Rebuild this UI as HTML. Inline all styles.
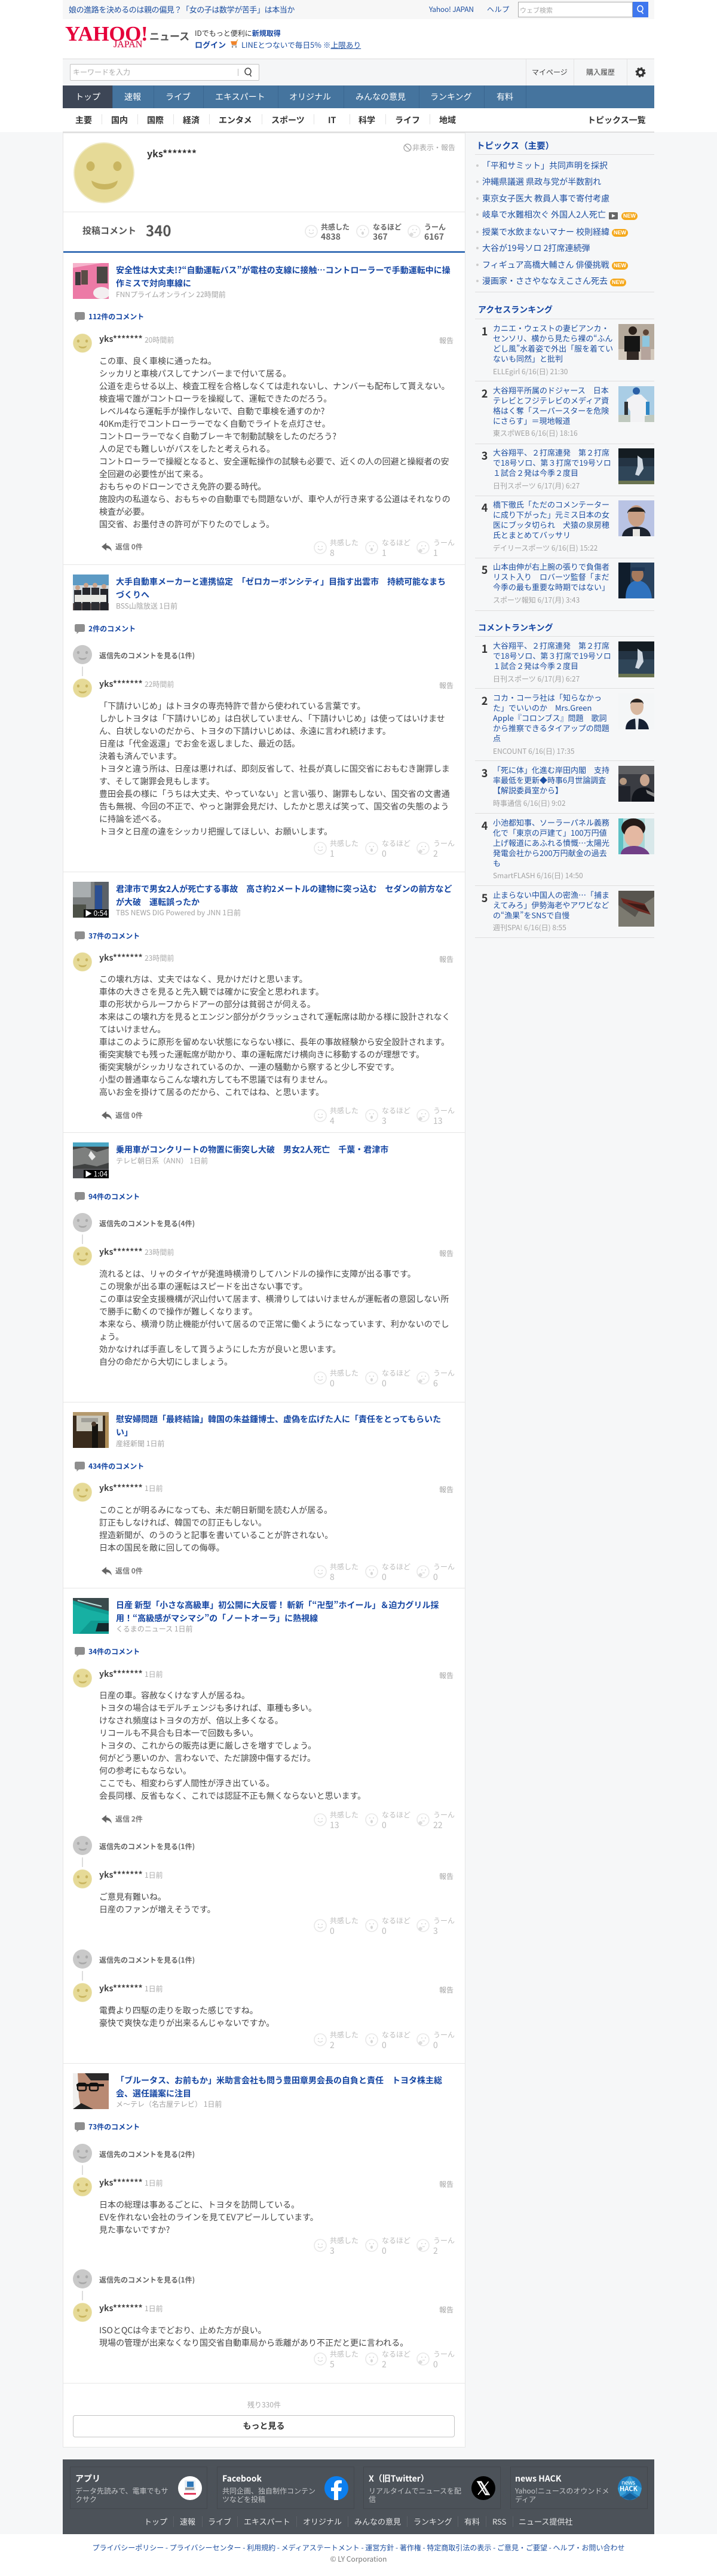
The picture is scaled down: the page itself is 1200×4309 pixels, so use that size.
<!DOCTYPE html>
<html lang="ja"><head><meta charset="utf-8"><title>yks******* - Yahoo!ニュース</title>
<style>
html,body{margin:0;padding:0}
body{position:relative;width:1200px;height:4309px;overflow:hidden;background:#f6f7f8;font-family:"Noto Sans CJK JP","Liberation Sans",sans-serif;color:#333}
div,span,svg,i,b,em{position:absolute;white-space:nowrap;font-style:normal}
a{color:inherit;text-decoration:none}
.bx{display:block}
.t{left:194px;font:bold 14px/22px "Noto Sans CJK JP",sans-serif;color:#1546a3}
.s{left:194px;font-size:12px;line-height:18px;color:#a3a3a3}
.c{left:148px;font:bold 12px/18px "Noto Sans CJK JP",sans-serif;color:#1546a3}
.ci{left:125px;width:17px;height:17px}
.th{left:122px;width:60px;height:60px}
.av{left:122px;width:32px;height:32px}
.n{left:166px;font:bold 14px/20px "Noto Sans CJK JP",sans-serif;color:#444}
.tm{left:242px;font-size:12px;line-height:20px;color:#aaa}
.rp{left:735px;font-size:12px;line-height:18px;color:#a3a3a3}
.b{left:166px;font-size:14px;line-height:21px;color:#444}
.re{left:170px;width:17px;height:15px}
.rt{left:193px;font:bold 12px/18px "Noto Sans CJK JP",sans-serif;color:#777}
.g{left:166px;font:bold 12px/18px "Noto Sans CJK JP",sans-serif;color:#666}
.ln{left:137px;width:2px;height:16px;background:#ddd}
.hr{left:106px;width:672px;height:1px;background:#e6e6e6}
.rr{left:0;width:0;height:0}
.rr svg{top:6px;width:22px;height:22px}
.rr i{top:0;font-size:12px;line-height:18px;color:#bcbcbc}
.rr em{top:16px;font-size:14px;line-height:20px;color:#bcbcbc}
.x1{left:525px}.x2{left:611px}.x3{left:697px}
.y1{left:552px}.y2{left:639px}.y3{left:725px}
.sh{left:795px;width:300px;height:1px;background:#dedede}
.st{left:800px;font:bold 14px/20px "Noto Sans CJK JP",sans-serif;color:#1546a3}
.si{left:807px;font-size:14px;line-height:20px;color:#1d4fa1}
.sb{left:797px;width:4px;height:4px;border-radius:2px;background:#ccc}
.new{width:27px;height:13px;border-radius:7px;background:#f5a81c;color:#fff;font:bold 9px/13px "Liberation Sans",sans-serif;text-align:center}
.rk{left:804px;width:14px;text-align:center;font:bold 18px/20px "Noto Sans CJK JP",sans-serif;color:#333}
.rt2{left:825px;font-size:13px;line-height:16.9px;color:#1d4fa1}
.rs{left:825px;font-size:12px;line-height:16px;color:#a3a3a3}
.ri{left:1035px;width:60px;height:60px}
.nav{top:143px;height:38px;font-size:14px;line-height:38px;color:#fff}
.ns{top:143px;width:1px;height:38px;background:#3a6690}
.sn{top:191px;font:bold 14px/20px "Noto Sans CJK JP",sans-serif;color:#333}
.sd{top:191px;width:1px;height:17px;background:#e3e3e3}
.fc{top:4126px;width:228px;height:69px;border:1px solid #43474d;background:#4c5259}
.ft{top:4136px;font:bold 14px/20px "Noto Sans CJK JP",sans-serif;color:#fff}
.fd{top:4160px;font-size:12px;line-height:13.5px;color:#c4c6c9}
.fi{top:4142px;width:40px;height:40px}
.fn{top:4209px;font-size:13px;line-height:18px;color:#e4e5e6}
.fs{top:4209px;width:1px;height:18px;background:#5d6269}
.play{left:140px;width:42px;height:14px;background:rgba(0,0,0,.85);color:#fff;font-size:12px;line-height:14px;text-align:center}
</style></head><body>
<svg width="0" height="0" style="left:0;top:0"><defs>
<symbol id="sm" viewBox="0 0 102 102"><circle cx="51" cy="51" r="50" fill="#e6da97" stroke="#efe9c4" stroke-width="2"/><ellipse cx="28.5" cy="40" rx="7" ry="8" fill="#c9b560"/><ellipse cx="73.5" cy="40" rx="7" ry="8" fill="#c9b560"/><path d="M30 64Q52 76 74 64Q72 79 52 79Q32 79 30 64Z" fill="#c9b560"/></symbol>
<symbol id="gy" viewBox="0 0 102 102"><circle cx="51" cy="51" r="51" fill="#c9c9c9"/><ellipse cx="28.5" cy="40" rx="7" ry="8" fill="#aaa"/><ellipse cx="73.5" cy="40" rx="7" ry="8" fill="#aaa"/><path d="M30 64Q52 76 74 64Q72 79 52 79Q32 79 30 64Z" fill="#a8a8a8"/></symbol>
<symbol id="f1" viewBox="0 0 22 22"><circle cx="11" cy="11" r="10" fill="#fff" stroke="#e8e8e8" stroke-width="1.6"/><circle cx="8" cy="9" r="1" fill="#d6d6d6"/><circle cx="14" cy="9" r="1" fill="#d6d6d6"/><path d="M7 13q4 4 8 0" fill="none" stroke="#d6d6d6" stroke-width="1.2"/></symbol>
<symbol id="f2" viewBox="0 0 22 22"><circle cx="11" cy="11" r="10" fill="#fff" stroke="#e8e8e8" stroke-width="1.6"/><circle cx="8" cy="8" r="1" fill="#d6d6d6"/><circle cx="14" cy="8" r="1" fill="#d6d6d6"/><ellipse cx="11" cy="14" rx="2" ry="2.8" fill="#d6d6d6"/></symbol>
<symbol id="f3" viewBox="0 0 22 22"><circle cx="11" cy="11" r="10" fill="#fff" stroke="#e8e8e8" stroke-width="1.6"/><circle cx="9" cy="8" r="1" fill="#d6d6d6"/><circle cx="15" cy="8" r="1" fill="#d6d6d6"/><path d="M10 13h4" stroke="#d6d6d6" stroke-width="1.2"/><path d="M3 16l3-3 3 1 1 3-3 3-3-1z" fill="#dcdcdc"/></symbol>
<symbol id="cm" viewBox="0 0 17 17"><path d="M2.5 0h12A2.5 2.5 0 0 1 17 2.5v8a2.500 2.500 0 0 1-2.500 2.500H7L3.500 16.500V13h-1A2.500 2.500 0 0 1 0 10.500v-8A2.500 2.500 0 0 1 2.500 0z" fill="#8e8e8e"/></symbol>
<symbol id="ar" viewBox="0 0 17 15"><path d="M8 0L0 6.500l8 6.500V9c4 0 7 1.500 9 5.500C16.500 8.500 13 4.500 8 4z" fill="#666"/></symbol>
</defs></svg>

<!-- top -->
<div style="left:0;top:0;width:1200px;height:221px;background:#fff"></div>
<div style="left:105px;top:0;width:990px;height:32px;background:#f7f7f7"></div>
<div style="left:115px;top:7px;font-size:13px;line-height:18px;color:#1d4fa1;letter-spacing:-.4px">娘の進路を決めるのは親の偏見？「女の子は数学が苦手」は本当か</div>
<div style="left:718px;top:7px;font-size:12px;line-height:18px;color:#1d4fa1;letter-spacing:-.2px">Yahoo! JAPAN</div>
<div style="left:815px;top:7px;font-size:12px;line-height:18px;color:#1d4fa1;letter-spacing:.6px">ヘルプ</div>
<div style="left:867px;top:3px;width:190px;height:24px;border:1px solid #aaa;background:#fff"></div>
<div style="left:870px;top:8px;font-size:11px;line-height:18px;color:#aaa">ウェブ検索</div>
<div style="left:1059px;top:3px;width:26px;height:26px;background:#3f77ee"></div>
<svg style="left:1064px;top:8px" width="16" height="16" viewBox="0 0 16 16"><ellipse cx="7.500" cy="6.500" rx="4.500" ry="5" fill="none" stroke="#fff" stroke-width="1.600"/><path d="M9.500 11l3 4" stroke="#fff" stroke-width="1.600"/></svg>

<div style="left:109px;top:34px;font:bold 35px/46px 'Liberation Serif',serif;color:#e5003a;letter-spacing:-.4px">YAHOO!</div>
<div style="left:190px;top:65px;font:normal 16px/20px 'Liberation Serif',serif;color:#d81e4f;-webkit-text-stroke:.3px #d81e4f">JAPAN</div>
<div style="left:250px;top:47px;font:bold 17px/26px 'Noto Sans CJK JP',sans-serif;color:#555">ニュース</div>
<div style="left:326px;top:47px;font-size:12px;line-height:18px;color:#333">IDでもっと便利に<b style="position:static;color:#1546a3">新規取得</b></div>
<div style="left:326px;top:66px;font:bold 13px/18px 'Noto Sans CJK JP',sans-serif;color:#1546a3">ログイン</div>
<svg style="left:385px;top:66px" width="15" height="15" viewBox="0 0 15 15"><path d="M1 3h11l-1.500 6H3z" fill="#f0852c"/><path d="M3 10h8" stroke="#888"/><circle cx="4" cy="12.500" r="1.200" fill="#777"/><circle cx="10" cy="12.500" r="1.200" fill="#777"/><path d="M11 3l2-3" stroke="#e8a93c" stroke-width="1.500"/></svg>
<div style="left:404px;top:66px;font-size:12.700px;line-height:18px;color:#1d4fa1">LINEとつないで毎日5% ※<span style="position:static;text-decoration:underline">上限あり</span></div>

<div style="left:105px;top:98px;width:990px;height:45px;background:#f5f6f7;box-shadow:inset 0 1px 0 #dcdcdc"></div>
<div style="left:117px;top:107px;width:315px;height:26px;border:1px solid #c4c4c4;border-radius:2px;background:#fff"></div>
<div style="left:122px;top:112px;font-size:12px;line-height:18px;color:#aaa">キーワードを入力</div>
<div style="left:398px;top:115px;width:1px;height:12px;background:#bbb"></div>
<svg style="left:407px;top:112px" width="18" height="18" viewBox="0 0 18 18"><ellipse cx="8" cy="7.500" rx="5" ry="5.500" fill="none" stroke="#444" stroke-width="1.500"/><path d="M11 12l2.500 4" stroke="#444" stroke-width="1.500"/></svg>
<div style="left:880px;top:99px;width:1px;height:44px;background:#e4e4e4"></div>
<div style="left:960px;top:99px;width:1px;height:44px;background:#e4e4e4"></div>
<div style="left:1049px;top:99px;width:1px;height:44px;background:#e4e4e4"></div>
<div style="left:890px;top:112px;font-size:12px;line-height:18px;color:#444">マイページ</div>
<div style="left:981px;top:112px;font-size:12px;line-height:18px;color:#444">購入履歴</div>
<svg style="left:1063px;top:112px" width="18" height="18" viewBox="0 0 18 18"><circle cx="9" cy="9" r="5" fill="none" stroke="#333" stroke-width="3.500"/><circle cx="9" cy="9" r="7.300" fill="none" stroke="#333" stroke-width="2.400" stroke-dasharray="3 2.730"/></svg>

<div style="left:105px;top:143px;width:990px;height:38px;background:#45749e"></div>
<div style="left:105px;top:143px;width:83px;height:38px;background:#3d4656"></div>
<div class="ns" style="left:188px"></div><div class="ns" style="left:257px"></div><div class="ns" style="left:340px"></div><div class="ns" style="left:465px"></div><div class="ns" style="left:575px"></div><div class="ns" style="left:701px"></div><div class="ns" style="left:810px"></div><div class="ns" style="left:880px"></div>
<div class="nav" style="left:126px">トップ</div><div class="nav" style="left:208px">速報</div><div class="nav" style="left:277px">ライブ</div><div class="nav" style="left:360px">エキスパート</div><div class="nav" style="left:484px">オリジナル</div><div class="nav" style="left:595px">みんなの意見</div><div class="nav" style="left:720px">ランキング</div><div class="nav" style="left:831px">有料</div>

<div class="sn" style="left:126px">主要</div><div class="sn" style="left:186px">国内</div><div class="sn" style="left:246px">国際</div><div class="sn" style="left:306px">経済</div><div class="sn" style="left:366px">エンタメ</div><div class="sn" style="left:454px">スポーツ</div><div class="sn" style="left:549px">IT</div><div class="sn" style="left:600px">科学</div><div class="sn" style="left:661px">ライフ</div><div class="sn" style="left:735px">地域</div><div class="sn" style="left:983px">トピックス一覧</div>
<div class="sd" style="left:170px"></div><div class="sd" style="left:230px"></div><div class="sd" style="left:290px"></div><div class="sd" style="left:350px"></div><div class="sd" style="left:438px"></div><div class="sd" style="left:525px"></div><div class="sd" style="left:585px"></div><div class="sd" style="left:645px"></div><div class="sd" style="left:719px"></div>
<div style="left:105px;top:220px;width:990px;height:2px;background:#dedede"></div>

<!-- main card -->
<div style="left:105px;top:222px;width:672px;height:3870px;background:#fff;border:1px solid #e6e6e6"></div>
<svg style="left:123px;top:238px" width="102" height="102"><use href="#sm"/></svg>
<div style="left:246px;top:244px;font:bold 16px/24px 'Noto Sans CJK JP',sans-serif;color:#333">yks*******</div>
<svg style="left:675px;top:240px" width="14" height="14" viewBox="0 0 14 14"><circle cx="7" cy="7" r="6" fill="none" stroke="#999" stroke-width="1.200"/><path d="M3 3l8 8" stroke="#999" stroke-width="1.200"/></svg>
<div style="left:690px;top:238px;font-size:12px;line-height:18px;color:#a3a3a3">非表示・報告</div>
<div style="left:106px;top:354px;width:672px;height:1px;background:#e6e6e6"></div>
<div style="left:138px;top:375px;font:bold 15px/22px 'Noto Sans CJK JP',sans-serif;color:#555">投稿コメント</div>
<div style="left:244px;top:368px;font:bold 24px/34px 'Noto Sans CJK JP',sans-serif;color:#555">340</div>
<svg style="left:510px;top:376px" width="22" height="22"><use href="#f1"/></svg>
<svg style="left:596px;top:376px" width="22" height="22"><use href="#f2"/></svg>
<svg style="left:682px;top:376px" width="22" height="22"><use href="#f3"/></svg>
<div style="left:537px;top:371px;font:bold 12px/18px 'Noto Sans CJK JP',sans-serif;color:#666">共感した</div><div style="left:537px;top:386px;font:bold 14px/20px 'Noto Sans CJK JP',sans-serif;color:#666">4838</div>
<div style="left:624px;top:371px;font:bold 12px/18px 'Noto Sans CJK JP',sans-serif;color:#666">なるほど</div><div style="left:624px;top:386px;font:bold 14px/20px 'Noto Sans CJK JP',sans-serif;color:#666">367</div>
<div style="left:710px;top:371px;font:bold 12px/18px 'Noto Sans CJK JP',sans-serif;color:#666">うーん</div><div style="left:710px;top:386px;font:bold 14px/20px 'Noto Sans CJK JP',sans-serif;color:#666">6167</div>
<div style="left:106px;top:420px;width:672px;height:3px;background:#3e73b8"></div>

<!-- A1 -->
<svg class="th" style="top:440px" viewBox="0 0 60 60"><rect width="60" height="60" fill="#f6b3cc"/><path d="M0 8l48-8h12v60H0z" fill="#ec7aa6"/><rect x="4" y="15" width="9" height="22" fill="#3d3a3c"/><rect x="14" y="12" width="11" height="24" fill="#5b4d46"/><rect x="40" y="6" width="18" height="28" fill="#4a4744"/><ellipse cx="48" cy="50" rx="14" ry="10" fill="#f3eef0"/></svg>
<div class="t" style="top:441px">安全性は大丈夫!?“自動運転バス”が電柱の支線に接触…コントローラーで手動運転中に操<br>作ミスで対向車線に</div>
<div class="s" style="top:484px">FNNプライムオンライン 22時間前</div>
<svg class="ci" style="top:522px"><use href="#cm"/></svg><div class="c" style="top:521px">112件のコメント</div>
<svg class="av" style="top:558px"><use href="#sm"/></svg>
<div class="n" style="top:557px">yks*******</div><div class="tm" style="top:559px">20時間前</div><div class="rp" style="top:561px">報告</div>
<div class="b" style="top:594px">この車、良く車検に通ったね。<br>シッカリと車検パスしてナンバーまで付いて居る。<br>公道を走らせる以上、検査工程を合格しなくては走れないし、ナンバーも配布して貰えない。<br>検査場で誰がコントローラを操縦して、運転できたのだろう。<br>レベル4なら運転手が操作しないで、自動で車検を通すのか?<br>40Km走行でコントローラーでなく自動でライトを点灯させ。<br>コントローラーでなく自動ブレーキで制動試験をしたのだろう?<br>人の足でも難しいがパスをしたと考えられる。<br>コントローラーで操縦となると、安全運転操作の試験も必要で、近くの人の回避と操縦者の安<br>全回避の必要性が出て来る。<br>おもちゃのドローンでさえ免許の要る時代。<br>施設内の私道なら、おもちゃの自動車でも問題ないが、車や人が行き来する公道はそれなりの<br>検査が必要。<br>国交省、お墨付きの許可が下りたのでしょう。</div>
<svg class="re" style="top:908px"><use href="#ar"/></svg><div class="rt" style="top:906px">返信 0件</div>
<div class="rr" style="top:899px"><svg class="x1"><use href="#f1"/></svg><i class="y1">共感した</i><em class="y1">8</em><svg class="x2"><use href="#f2"/></svg><i class="y2">なるほど</i><em class="y2">1</em><svg class="x3"><use href="#f3"/></svg><i class="y3">うーん</i><em class="y3">1</em></div>
<div class="hr" style="top:944px"></div>

<!-- A2 -->
<svg class="th" style="top:961px" viewBox="0 0 60 60"><rect width="60" height="60" fill="#cfd8de"/><rect width="60" height="18" fill="#5c9ac4"/><rect y="48" width="60" height="12" fill="#5a4f4f"/><rect x="2" y="26" width="12" height="34" fill="#2c2d33"/><rect x="16" y="22" width="13" height="38" fill="#24252b"/><rect x="31" y="22" width="13" height="38" fill="#2c2d33"/><rect x="46" y="24" width="13" height="36" fill="#24252b"/><circle cx="8" cy="22" r="4" fill="#c9a48c"/><circle cx="22" cy="18" r="4" fill="#c9a48c"/><circle cx="37" cy="18" r="4" fill="#c9a48c"/><circle cx="52" cy="20" r="4" fill="#c9a48c"/><rect x="3" y="34" width="53" height="12" fill="#e8e8e4"/></svg>
<div class="t" style="top:962px">大手自動車メーカーと連携協定　「ゼロカーボンシティ」目指す出雲市　持続可能なまち<br>づくりへ</div>
<div class="s" style="top:1005px">BSS山陰放送 1日前</div>
<svg class="ci" style="top:1044px"><use href="#cm"/></svg><div class="c" style="top:1043px">2件のコメント</div>
<svg class="av" style="top:1079px"><use href="#gy"/></svg><div class="g" style="top:1088px">返信先のコメントを見る(1件)</div><div class="ln" style="top:1115px"></div>
<svg class="av" style="top:1135px"><use href="#sm"/></svg>
<div class="n" style="top:1134px">yks*******</div><div class="tm" style="top:1135px">22時間前</div><div class="rp" style="top:1138px">報告</div>
<div class="b" style="top:1171px">「下請けいじめ」はトヨタの専売特許で昔から使われている言葉です。<br>しかしトヨタは「下請けいじめ」は白状していません、「下請けいじめ」は使ってはいけませ<br>ん、白状しないのだから、トヨタの下請けいじめは、永遠に言われ続けます。<br>日産は「代金返還」でお金を返しました、最近の話。<br>決着も済んでいます。<br>トヨタと違う所は、日産は悪ければ、即刻反省して、社長が真しに国交省におもむき謝罪しま<br>す、そして謝罪会見もします。<br>豊田会長の様に「うちは大丈夫、やっていない」と言い張り、謝罪もしない、国交省の文書通<br>告も無視、今回の不正で、やっと謝罪会見だけ、したかと思えば笑って、国交省の失態のよう<br>に持論を述べる。<br>トヨタと日産の違をシッカリ把握してほしい、お願いします。</div>
<div class="rr" style="top:1402px"><svg class="x1"><use href="#f1"/></svg><i class="y1">共感した</i><em class="y1">1</em><svg class="x2"><use href="#f2"/></svg><i class="y2">なるほど</i><em class="y2">0</em><svg class="x3"><use href="#f3"/></svg><i class="y3">うーん</i><em class="y3">2</em></div>
<div class="hr" style="top:1458px"></div>

<!-- A3 -->
<svg class="th" style="top:1475px" viewBox="0 0 60 60"><rect width="60" height="60" fill="#7b7f80"/><rect x="0" y="0" width="30" height="26" fill="#a9aeb0"/><rect x="36" y="0" width="24" height="60" fill="#5b6168"/><rect x="37" y="6" width="12" height="40" fill="#2b4f93"/><path d="M0 38h22v22H0z" fill="#4d5148"/></svg>
<div class="play" style="top:1521px">▶ 0:54</div>
<div class="t" style="top:1476px">君津市で男女2人が死亡する事故　高さ約2メートルの建物に突っ込む　セダンの前方など<br>が大破　運転誤ったか</div>
<div class="s" style="top:1518px">TBS NEWS DIG Powered by JNN 1日前</div>
<svg class="ci" style="top:1558px"><use href="#cm"/></svg><div class="c" style="top:1557px">37件のコメント</div>
<svg class="av" style="top:1593px"><use href="#sm"/></svg>
<div class="n" style="top:1592px">yks*******</div><div class="tm" style="top:1593px">23時間前</div><div class="rp" style="top:1596px">報告</div>
<div class="b" style="top:1628px">この壊れ方は、丈夫ではなく、見かけだけと思います。<br>車体の大きさを見ると先入観では確かに安全と思われます。<br>車の形状からルーフからドアーの部分は貧弱さが伺える。<br>本来はこの壊れ方を見るとエンジン部分がクラッシュされて運転席は助かる様に設計されなく<br>てはいけません。<br>車はこのように原形を留めない状態にならない様に、長年の事故経験から安全設計されます。<br>衝突実験でも残った運転席が助かり、車の運転席だけ横向きに移動するのが理想です。<br>衝突実験がシッカリなされているのか、一連の騒動から察すると少し不安です。<br>小型の普通車ならこんな壊れ方しても不思議では有りません。<br>高いお金を掛けて居るのだから、これではね、と思います。</div>
<svg class="re" style="top:1859px"><use href="#ar"/></svg><div class="rt" style="top:1857px">返信 0件</div>
<div class="rr" style="top:1849px"><svg class="x1"><use href="#f1"/></svg><i class="y1">共感した</i><em class="y1">4</em><svg class="x2"><use href="#f2"/></svg><i class="y2">なるほど</i><em class="y2">3</em><svg class="x3"><use href="#f3"/></svg><i class="y3">うーん</i><em class="y3">13</em></div>
<div class="hr" style="top:1894px"></div>

<!-- A4 -->
<svg class="th" style="top:1911px" viewBox="0 0 60 60"><rect width="60" height="60" fill="#3f4141"/><rect width="60" height="7" fill="#4aa6c4"/><path d="M0 12l20-4 20 8 20-6v24l-20 6-20-4-20 4z" fill="#7d7f7e"/><path d="M30 14l8 10-6 6-6-8z" fill="#e9eaea"/><rect y="44" width="60" height="16" fill="#55565a"/></svg>
<div class="play" style="top:1957px;left:140px;background:#000">▶ 1:04</div>
<div class="t" style="top:1912px">乗用車がコンクリートの物置に衝突し大破　男女2人死亡　千葉・君津市</div>
<div class="s" style="top:1933px">テレビ朝日系（ANN） 1日前</div>
<svg class="ci" style="top:1994px"><use href="#cm"/></svg><div class="c" style="top:1993px">94件のコメント</div>
<svg class="av" style="top:2029px"><use href="#gy"/></svg><div class="g" style="top:2038px">返信先のコメントを見る(4件)</div><div class="ln" style="top:2065px"></div>
<svg class="av" style="top:2085px"><use href="#sm"/></svg>
<div class="n" style="top:2084px">yks*******</div><div class="tm" style="top:2085px">23時間前</div><div class="rp" style="top:2088px">報告</div>
<div class="b" style="top:2121px">流れるとは、リャのタイヤが発進時横滑りしてハンドルの操作に支障が出る事です。<br>この現象が出る車の運転はスピードを出さない事です。<br>この車は安全支援機構が沢山付いて居ます、横滑りしてはいけませんが運転者の意図しない所<br>で勝手に動くので操作が難しくなります。<br>本来なら、横滑り防止機能が付いて居るので正常に働くようになっています、利かないのでし<br>ょう。<br>効かなければ手直しをして貰うようにした方が良いと思います。<br>自分の命だから大切にしましょう。</div>
<div class="rr" style="top:2288px"><svg class="x1"><use href="#f1"/></svg><i class="y1">共感した</i><em class="y1">0</em><svg class="x2"><use href="#f2"/></svg><i class="y2">なるほど</i><em class="y2">0</em><svg class="x3"><use href="#f3"/></svg><i class="y3">うーん</i><em class="y3">6</em></div>
<div class="hr" style="top:2345px"></div>

<!-- A5 -->
<svg class="th" style="top:2362px" viewBox="0 0 60 60"><rect width="60" height="60" fill="#3a2c1d"/><rect x="0" y="0" width="60" height="6" fill="#b59a6e"/><rect x="6" y="6" width="44" height="26" fill="#c9c7bb"/><rect x="14" y="10" width="28" height="7" fill="#a09f98"/><rect x="32" y="20" width="10" height="40" fill="#15130f"/><circle cx="35" cy="20" r="4" fill="#4a3a2c"/><rect x="54" y="6" width="6" height="54" fill="#b08f58"/></svg>
<div class="t" style="top:2363px">慰安婦問題「最終結論」韓国の朱益鍾博士、虚偽を広げた人に「責任をとってもらいた<br>い」</div>
<div class="s" style="top:2406px">産経新聞 1日前</div>
<svg class="ci" style="top:2445px"><use href="#cm"/></svg><div class="c" style="top:2444px">434件のコメント</div>
<svg class="av" style="top:2480px"><use href="#sm"/></svg>
<div class="n" style="top:2479px">yks*******</div><div class="tm" style="top:2480px">1日前</div><div class="rp" style="top:2483px">報告</div>
<div class="b" style="top:2516px">このことが明るみになっても、未だ朝日新聞を読む人が居る。<br>訂正もしなければ、韓国での訂正もしない。<br>捏造新聞が、のうのうと記事を書いていることが許されない。<br>日本の国民を敵に回しての侮辱。</div>
<svg class="re" style="top:2621px"><use href="#ar"/></svg><div class="rt" style="top:2619px">返信 0件</div>
<div class="rr" style="top:2612px"><svg class="x1"><use href="#f1"/></svg><i class="y1">共感した</i><em class="y1">8</em><svg class="x2"><use href="#f2"/></svg><i class="y2">なるほど</i><em class="y2">0</em><svg class="x3"><use href="#f3"/></svg><i class="y3">うーん</i><em class="y3">0</em></div>
<div class="hr" style="top:2656px"></div>

<!-- A6 -->
<svg class="th" style="top:2673px" viewBox="0 0 60 60"><rect width="60" height="60" fill="#0e9a90"/><path d="M0 0h60v22L30 14 0 4z" fill="#3a4a4c"/><path d="M0 10l28 10 32 8v10H30L10 60H0z" fill="#17b0a3"/><path d="M42 42h18v14H38z" fill="#12282c"/><path d="M8 4l40 10" stroke="#bfe2de" stroke-width="2"/></svg>
<div class="t" style="top:2674px">日産 新型「小さな高級車」初公開に大反響！ 斬新「“卍型”ホイール」＆迫力グリル採<br>用！“高級感がマシマシ”の「ノートオーラ」に熱視線</div>
<div class="s" style="top:2716px">くるまのニュース 1日前</div>
<svg class="ci" style="top:2755px"><use href="#cm"/></svg><div class="c" style="top:2754px">34件のコメント</div>
<svg class="av" style="top:2791px"><use href="#sm"/></svg>
<div class="n" style="top:2790px">yks*******</div><div class="tm" style="top:2791px">1日前</div><div class="rp" style="top:2794px">報告</div>
<div class="b" style="top:2826px">日産の車。容赦なくけなす人が居るね。<br>トヨタの場合はモデルチェンジも多ければ、車種も多い。<br>けなされ頻度はトヨタの方が、倍以上多くなる。<br>リコールも不具合も日本一で回数も多い。<br>トヨタの、これからの販売は更に厳しさを増すでしょう。<br>何がどう悪いのか、言わないで、ただ誹謗中傷するだけ。<br>何の参考にもならない。<br>ここでも、相変わらず人間性が浮き出ている。<br>会長同様、反省もなく、これでは認証不正も無くならないと思います。</div>
<svg class="re" style="top:3036px"><use href="#ar"/></svg><div class="rt" style="top:3034px">返信 2件</div>
<div class="rr" style="top:3027px"><svg class="x1"><use href="#f1"/></svg><i class="y1">共感した</i><em class="y1">13</em><svg class="x2"><use href="#f2"/></svg><i class="y2">なるほど</i><em class="y2">0</em><svg class="x3"><use href="#f3"/></svg><i class="y3">うーん</i><em class="y3">22</em></div>
<svg class="av" style="top:3071px"><use href="#gy"/></svg><div class="g" style="top:3080px">返信先のコメントを見る(1件)</div><div class="ln" style="top:3107px"></div>
<svg class="av" style="top:3127px"><use href="#sm"/></svg>
<div class="n" style="top:3126px">yks*******</div><div class="tm" style="top:3127px">1日前</div><div class="rp" style="top:3130px">報告</div>
<div class="b" style="top:3163px">ご意見有難いね。<br>日産のファンが増えそうです。</div>
<div class="rr" style="top:3204px"><svg class="x1"><use href="#f1"/></svg><i class="y1">共感した</i><em class="y1">0</em><svg class="x2"><use href="#f2"/></svg><i class="y2">なるほど</i><em class="y2">0</em><svg class="x3"><use href="#f3"/></svg><i class="y3">うーん</i><em class="y3">3</em></div>
<svg class="av" style="top:3261px"><use href="#gy"/></svg><div class="g" style="top:3270px">返信先のコメントを見る(1件)</div><div class="ln" style="top:3297px"></div>
<svg class="av" style="top:3317px"><use href="#sm"/></svg>
<div class="n" style="top:3316px">yks*******</div><div class="tm" style="top:3317px">1日前</div><div class="rp" style="top:3320px">報告</div>
<div class="b" style="top:3353px">電費より四駆の走りを取った感じですね。<br>豪快で爽快な走りが出来るんじゃないですか。</div>
<div class="rr" style="top:3395px"><svg class="x1"><use href="#f1"/></svg><i class="y1">共感した</i><em class="y1">2</em><svg class="x2"><use href="#f2"/></svg><i class="y2">なるほど</i><em class="y2">0</em><svg class="x3"><use href="#f3"/></svg><i class="y3">うーん</i><em class="y3">0</em></div>
<div class="hr" style="top:3451px"></div>

<!-- A7 -->
<svg class="th" style="top:3468px" viewBox="0 0 60 60"><rect width="60" height="60" fill="#f0efee"/><path d="M8 0h52v60H14L10 40z" fill="#b98a73"/><path d="M20 0h40v12H30z" fill="#2c2a2a"/><path d="M6 18h46v4H6z" fill="#111"/><rect x="8" y="17" width="14" height="12" rx="3" fill="none" stroke="#111" stroke-width="2.500"/><rect x="28" y="17" width="14" height="12" rx="3" fill="none" stroke="#111" stroke-width="2.500"/><path d="M0 60l14-10 20 10z" fill="#222"/></svg>
<div class="t" style="top:3469px">「ブルータス、お前もか」米助言会社も問う豊田章男会長の自負と責任　トヨタ株主総<br>会、選任議案に注目</div>
<div class="s" style="top:3511px">メ～テレ（名古屋テレビ） 1日前</div>
<svg class="ci" style="top:3550px"><use href="#cm"/></svg><div class="c" style="top:3549px">73件のコメント</div>
<svg class="av" style="top:3586px"><use href="#gy"/></svg><div class="g" style="top:3595px">返信先のコメントを見る(2件)</div><div class="ln" style="top:3622px"></div>
<svg class="av" style="top:3642px"><use href="#sm"/></svg>
<div class="n" style="top:3641px">yks*******</div><div class="tm" style="top:3642px">1日前</div><div class="rp" style="top:3645px">報告</div>
<div class="b" style="top:3678px">日本の総理は事あるごとに、トヨタを訪問している。<br>EVを作れない会社のラインを見てEVアピールしています。<br>見た事ないですか?</div>
<div class="rr" style="top:3739px"><svg class="x1"><use href="#f1"/></svg><i class="y1">共感した</i><em class="y1">3</em><svg class="x2"><use href="#f2"/></svg><i class="y2">なるほど</i><em class="y2">0</em><svg class="x3"><use href="#f3"/></svg><i class="y3">うーん</i><em class="y3">2</em></div>
<svg class="av" style="top:3796px"><use href="#gy"/></svg><div class="g" style="top:3805px">返信先のコメントを見る(1件)</div><div class="ln" style="top:3832px"></div>
<svg class="av" style="top:3852px"><use href="#sm"/></svg>
<div class="n" style="top:3851px">yks*******</div><div class="tm" style="top:3852px">1日前</div><div class="rp" style="top:3855px">報告</div>
<div class="b" style="top:3888px">ISOとQCは今までどおり、止めた方が良い。<br>現場の管理が出来なくなり国交省自動車局から乖離があり不正だと更に言われる。</div>
<div class="rr" style="top:3929px"><svg class="x1"><use href="#f1"/></svg><i class="y1">共感した</i><em class="y1">5</em><svg class="x2"><use href="#f2"/></svg><i class="y2">なるほど</i><em class="y2">2</em><svg class="x3"><use href="#f3"/></svg><i class="y3">うーん</i><em class="y3">0</em></div>
<div class="hr" style="top:3986px"></div>

<div style="left:106px;width:672px;top:4014px;text-align:center;font-size:12px;line-height:18px;color:#aaa">残り330件</div>
<div style="left:122px;top:4040px;width:637px;height:35px;border:1px solid #c4c4c4;border-radius:4px;background:#fff;text-align:center;font:bold 14px/35px 'Noto Sans CJK JP',sans-serif;color:#333">もっと見る</div>

<!-- sidebar -->
<div class="sh" style="top:220px;height:2px"></div>
<div class="st" style="left:797px;top:234px;font-size:14.500px">トピックス（主要）</div>
<div class="sh" style="top:258px"></div>
<div class="sb" style="top:275px"></div><div class="si" style="top:267px;left:807px">「平和サミット」共同声明を採択</div>
<div class="sb" style="top:302px"></div><div class="si" style="top:294px">沖縄県議選 県政与党が半数割れ</div>
<div class="sb" style="top:330px"></div><div class="si" style="top:322px">東京女子医大 教員人事で寄付考慮</div>
<div class="sb" style="top:357px"></div><div class="si" style="top:349px">岐阜で水難相次ぐ 外国人2人死亡</div>
<div style="left:1019px;top:355px;width:15px;height:12px;background:#666;border-radius:1px"></div><svg style="left:1024px;top:358px" width="6" height="6"><path d="M0 0l6 3-6 3z" fill="#fff"/></svg><div class="new" style="left:1040px;top:355px">NEW</div>
<div class="sb" style="top:386px"></div><div class="si" style="top:378px">授業で水飲まないマナー 校則経緯</div><div class="new" style="left:1024px;top:383px">NEW</div>
<div class="sb" style="top:413px"></div><div class="si" style="top:405px">大谷が19号ソロ 2打席連続弾</div>
<div class="sb" style="top:441px"></div><div class="si" style="top:433px">フィギュア高橋大輔さん 俳優挑戦</div><div class="new" style="left:1024px;top:438px">NEW</div>
<div class="sb" style="top:468px"></div><div class="si" style="top:460px">漫画家・ささやななえこさん死去</div><div class="new" style="left:1021px;top:466px">NEW</div>
<div class="sh" style="top:488px"></div>

<div class="st" style="top:508px">アクセスランキング</div>
<div class="sh" style="top:533px"></div>
<div class="rk" style="top:544px">1</div><div class="rt2" style="top:541px">カニエ・ウェストの妻ビアンカ・<br>センソリ、横から見たら裸の“ふん<br>どし風”水着姿で外出「服を着てい<br>ないも同然」と批判</div><div class="rs" style="top:614px">ELLEgirl 6/16(日) 21:30</div>
<svg class="ri" style="top:542px" viewBox="0 0 60 60"><rect width="60" height="60" fill="#b4a99c"/><rect y="42" width="60" height="18" fill="#d2c8bb"/><circle cx="24" cy="11" r="7" fill="#2a201a"/><path d="M10 20h26v26H10z" fill="#151515"/><rect x="14" y="46" width="20" height="14" fill="#332a26"/><circle cx="46" cy="14" r="5" fill="#5c4335"/><path d="M40 20h12v18h-12z" fill="#8fc6de"/><path d="M38 38h16v22H38z" fill="#b5a49c"/></svg>
<div class="sh" style="top:637px"></div>
<div class="rk" style="top:648px">2</div><div class="rt2" style="top:645px">大谷翔平所属のドジャース　日本<br>テレビとフジテレビのメディア資<br>格はく奪「スーパースターを危険<br>にさらす」＝現地報道</div><div class="rs" style="top:717px">東スポWEB 6/16(日) 18:16</div>
<svg class="ri" style="top:646px" viewBox="0 0 60 60"><rect width="60" height="60" fill="#a9cde5"/><rect y="48" width="60" height="12" fill="#bfc9bf"/><circle cx="30" cy="8" r="6" fill="#2a5fa6"/><path d="M14 22l12-8h12l10 10 4 24-8 2v10H20V42l-6-10z" fill="#f2f2f4"/><rect x="10" y="26" width="6" height="22" fill="#2f3336"/><rect x="46" y="26" width="6" height="22" fill="#2f86c4"/></svg>
<div class="sh" style="top:742px"></div>
<div class="rk" style="top:752px">3</div><div class="rt2" style="top:749px">大谷翔平、２打席連発　第２打席<br>で18号ソロ、第３打席で19号ソロ<br>１試合２発は今季２度目</div><div class="rs" style="top:805px">日刊スポーツ 6/17(月) 6:27</div>
<svg class="ri" style="top:750px" viewBox="0 0 60 60"><rect width="60" height="60" fill="#243444"/><rect y="0" width="60" height="16" fill="#141c22"/><rect y="54" width="60" height="6" fill="#6a7450"/><rect y="30" width="60" height="24" fill="#2f4558"/><path d="M32 12l8 6 2 16-8 12-6-2 4-14z" fill="#cfd7e0"/></svg>
<div class="sh" style="top:829px"></div>
<div class="rk" style="top:839px">4</div><div class="rt2" style="top:836px">橋下徹氏「ただのコメンテーター<br>に成り下がった」元ミス日本の女<br>医にブッタ切られ　犬猿の泉房穂<br>氏とまとめてバッサリ</div><div class="rs" style="top:909px">デイリースポーツ 6/16(日) 15:22</div>
<svg class="ri" style="top:837px" viewBox="0 0 60 60"><rect width="60" height="60" fill="#b9c3e4"/><ellipse cx="30" cy="26" rx="14" ry="18" fill="#c99f84"/><path d="M15 22c0-14 30-14 30 0l-2-3H17z" fill="#26221f"/><path d="M6 60c2-14 16-16 24-16s22 2 24 16z" fill="#1d2430"/><path d="M24 48h12v12H24z" fill="#e8e6e2"/></svg>
<div class="sh" style="top:933px"></div>
<div class="rk" style="top:943px">5</div><div class="rt2" style="top:940px">山本由伸が右上腕の張りで負傷者<br>リスト入り　ロバーツ監督「まだ<br>今季の最も重要な時期ではない」</div><div class="rs" style="top:996px">スポーツ報知 6/17(月) 3:43</div>
<svg class="ri" style="top:941px" viewBox="0 0 60 60"><rect width="60" height="60" fill="#29425e"/><rect x="0" y="0" width="20" height="60" fill="#101d2c"/><path d="M12 60c0-22 10-30 20-30s22 8 24 30z" fill="#2f72be"/><ellipse cx="32" cy="20" rx="10" ry="12" fill="#a67a5d"/><path d="M20 14h24v-6H22z" fill="#1e3654"/></svg>
<div class="sh" style="top:1021px"></div>

<div class="st" style="top:1040px">コメントランキング</div>
<div class="sh" style="top:1064px"></div>
<div class="rk" style="top:1075px">1</div><div class="rt2" style="top:1072px">大谷翔平、２打席連発　第２打席<br>で18号ソロ、第３打席で19号ソロ<br>１試合２発は今季２度目</div><div class="rs" style="top:1128px">日刊スポーツ 6/17(月) 6:27</div>
<svg class="ri" style="top:1073px" viewBox="0 0 60 60"><rect width="60" height="60" fill="#243444"/><rect y="0" width="60" height="16" fill="#141c22"/><rect y="54" width="60" height="6" fill="#6a7450"/><rect y="30" width="60" height="24" fill="#2f4558"/><path d="M32 12l8 6 2 16-8 12-6-2 4-14z" fill="#cfd7e0"/></svg>
<div class="sh" style="top:1151px"></div>
<div class="rk" style="top:1162px">2</div><div class="rt2" style="top:1159px">コカ・コーラ社は「知らなかっ<br>た」でいいのか　Mrs.Green<br>Apple『コロンブス』問題　歌詞<br>から推察できるタイアップの問題<br>点</div><div class="rs" style="top:1249px">ENCOUNT 6/16(日) 17:35</div>
<svg class="ri" style="top:1160px" viewBox="0 0 60 60"><rect width="60" height="60" fill="#f4f6f7"/><ellipse cx="31" cy="22" rx="11" ry="14" fill="#d8b8a0"/><path d="M20 18c0-12 22-12 22 0l-2-3H22z" fill="#2b2725"/><path d="M12 60c0-14 10-18 19-18s18 4 20 18z" fill="#162032"/><path d="M28 42h6l-1 18h-4z" fill="#e4e8ee"/></svg>
<div class="sh" style="top:1272px"></div>
<div class="rk" style="top:1283px">3</div><div class="rt2" style="top:1280px">「死に体」化進む岸田内閣　支持<br>率最低を更新◆時事6月世論調査<br>【解説委員室から】</div><div class="rs" style="top:1336px">時事通信 6/16(日) 9:02</div>
<svg class="ri" style="top:1281px" viewBox="0 0 60 60"><rect width="60" height="60" fill="#3a3c42"/><rect y="0" width="60" height="14" fill="#5e5f62"/><path d="M22 60c0-16 8-24 22-24s16 12 16 24z" fill="#12151c"/><ellipse cx="44" cy="24" rx="8" ry="10" fill="#c9a58e"/><path d="M0 34h20v26H0z" fill="#20232b"/><circle cx="8" cy="26" r="6" fill="#b69880"/><path d="M46 40l14 6v6l-12-6z" fill="#8a8a8a"/></svg>
<div class="sh" style="top:1360px"></div>
<div class="rk" style="top:1371px">4</div><div class="rt2" style="top:1368px">小池都知事、ソーラーパネル義務<br>化で「東京の戸建て」100万円値<br>上げ報道にあふれる憤慨…太陽光<br>発電会社から200万円献金の過去<br>も</div><div class="rs" style="top:1457px">SmartFLASH 6/16(日) 14:50</div>
<svg class="ri" style="top:1369px" viewBox="0 0 60 60"><rect width="60" height="60" fill="#a8d8d8"/><rect x="0" y="0" width="8" height="60" fill="#5ec0c4"/><rect x="44" y="0" width="16" height="60" fill="#d8e8ea"/><ellipse cx="25" cy="16" rx="20" ry="16" fill="#241a18"/><ellipse cx="26" cy="30" rx="16" ry="18" fill="#e4b8a2"/><path d="M4 60c0-10 12-14 22-14s22 4 26 14z" fill="#713f87"/></svg>
<div class="sh" style="top:1481px"></div>
<div class="rk" style="top:1492px">5</div><div class="rt2" style="top:1489px">止まらない中国人の密漁…「捕ま<br>えてみろ」伊勢海老やアワビなど<br>の“漁果”をSNSで自慢</div><div class="rs" style="top:1544px">週刊SPA! 6/16(日) 8:55</div>
<svg class="ri" style="top:1490px" viewBox="0 0 60 60"><rect width="60" height="60" fill="#7c7a70"/><path d="M0 0h60v10L40 24l-12 20L0 24z" fill="#58554f"/><path d="M4 12l40 10 10 18-20-6L8 20z" fill="#6b2a22"/><path d="M14 20l30 4 8 12-22-8z" fill="#3a1c18"/></svg>
<div class="sh" style="top:1568px"></div>

<!-- footer -->
<div style="left:105px;top:4114px;width:990px;height:125px;background:#4c5259"></div>
<div class="fc" style="left:117px"></div><div class="fc" style="left:363px"></div><div class="fc" style="left:608px"></div><div class="fc" style="left:854px"></div>
<div class="ft" style="left:126px">アプリ</div><div class="fd" style="left:126px">データ先読みで、電車でもサ<br>クサク</div>
<div class="ft" style="left:372px">Facebook</div><div class="fd" style="left:372px">共同企画、独自制作コンテン<br>ツなどを投稿</div>
<div class="ft" style="left:617px">X（旧Twitter）</div><div class="fd" style="left:617px">リアルタイムでニュースを配<br>信</div>
<div class="ft" style="left:862px">news HACK</div><div class="fd" style="left:862px">Yahoo!ニュースのオウンドメ<br>ディア</div>
<svg class="fi" style="left:298px" viewBox="0 0 40 40"><circle cx="20" cy="20" r="20" fill="#fff"/><rect x="11" y="7" width="18" height="18" fill="#e8eef4"/><rect x="15" y="9" width="11" height="9" fill="#2f78b8"/><rect x="12" y="19" width="15" height="4" fill="#999"/><rect x="10" y="28" width="20" height="3" fill="#e03b5c"/></svg>
<svg class="fi" style="left:543px" viewBox="0 0 40 40"><circle cx="20" cy="20" r="20" fill="#0c7ff0"/><path d="M23 40V25h5l1-6h-6v-4c0-2 1-3 3-3h3V7c-1 0-3-.300-5-.300-5 0-8 3-8 8v4.300h-5v6h5v15z" fill="#fff"/></svg>
<svg class="fi" style="left:789px" viewBox="0 0 40 40"><circle cx="20" cy="20" r="20" fill="#000"/><path d="M10 9h6.500l13.500 22h-6.500zM28.500 9L11 31M12.500 10.500l10.800 19h3.500L15.800 10.500z" fill="none" stroke="#fff" stroke-width="1.500"/></svg>
<svg class="fi" style="left:1034px" viewBox="0 0 40 40"><circle cx="20" cy="20" r="20" fill="#1f7fc2"/><path d="M20 0l10 14-10 8-10-8zM0 20l10-6 4 14-10 6zM40 20l-10-6-4 14 10 6z" fill="#39a0d8"/><path d="M20 28l12 8-12 4-12-4z" fill="#155c92"/></svg>
<div style="left:1040px;top:4146px;font-size:10px;line-height:12px;color:#fff;letter-spacing:-.4px">news</div>
<div style="left:1037px;top:4156px;font:bold 11px/14px 'Noto Sans CJK JP',sans-serif;color:#fff">HACK</div>

<div class="fn" style="left:241px">トップ</div><div class="fn" style="left:301px">速報</div><div class="fn" style="left:348px">ライブ</div><div class="fn" style="left:408px">エキスパート</div><div class="fn" style="left:507px">オリジナル</div><div class="fn" style="left:593px">みんなの意見</div><div class="fn" style="left:692px">ランキング</div><div class="fn" style="left:777px">有料</div><div class="fn" style="left:824px">RSS</div><div class="fn" style="left:868px">ニュース提供社</div>
<div class="fs" style="left:290px"></div><div class="fs" style="left:338px"></div><div class="fs" style="left:397px"></div><div class="fs" style="left:496px"></div><div class="fs" style="left:582px"></div><div class="fs" style="left:681px"></div><div class="fs" style="left:766px"></div><div class="fs" style="left:813px"></div><div class="fs" style="left:858px"></div>

<div style="left:0;width:1200px;top:4239px;height:70px;background:#fff"></div>
<div style="left:0;width:1200px;top:4253px;text-align:center;font-size:12px;line-height:18px;color:#1d4fa1">プライバシーポリシー - プライバシーセンター - 利用規約 - メディアステートメント - 運営方針 - 著作権 - 特定商取引法の表示 - ご意見・ご要望 - ヘルプ・お問い合わせ</div>
<div style="left:0;width:1200px;top:4272px;text-align:center;font-size:12px;line-height:18px;color:#777">© LY Corporation</div>
</body></html>
